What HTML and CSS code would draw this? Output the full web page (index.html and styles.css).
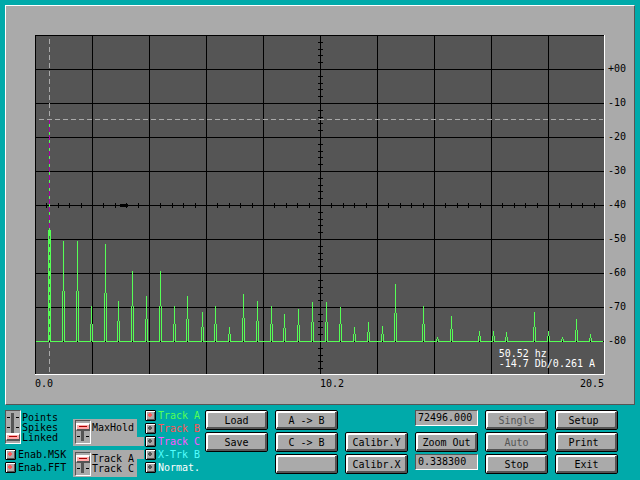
FILE: index.html
```html
<!DOCTYPE html>
<html lang="en">
<head>
<meta charset="utf-8">
<title>Spectrum</title>
<link rel="stylesheet" href="styles.css">
</head>
<body>
<main class="panel">
  <div class="plot">
    <svg class="chart" id="chart" viewBox="0 0 570 340" role="img" aria-label="Spectrum">
      <rect class="chart-bg" width="570" height="340"/>
      <path class="grid" id="grid"/>
      <path class="grid" id="ticks"/>
      <rect class="mark" x="85" y="169" width="8" height="3"/>
      <path class="trace" id="trace"/>
      <path class="edge" d="M569.5 0V339.5H0"/>
      <path class="cursor" d="M4 84.5H568"/>
      <path class="cursor" d="M14.5 4V84"/>
      <path class="held" d="M14.5 85V194"/>
      <path class="cross" d="M14.5 84V194"/>
      <path class="inner" d="M14.5 196V306"/>
      <path class="cursor" d="M14.5 308V338"/>
    </svg>
    <p class="readout">50.52 hz<br>-14.7 Db/0.261 A</p>
  </div>
  <ol class="y-axis">
    <li>+00</li><li>-10</li><li>-20</li><li>-30</li><li>-40</li><li>-50</li><li>-60</li><li>-70</li><li>-80</li>
  </ol>
  <div class="x-axis">
    <span class="low">0.0</span>
    <span class="mid">10.2</span>
    <span class="high">20.5</span>
  </div>
</main>

<form class="controls">
  <div class="modes">
    <div class="selector">
      <input class="slider tall" id="mode" type="range" min="0" max="2" value="2" aria-label="Drawing mode">
      <label class="lines spaced" for="mode"><span>Points</span><span>Spikes</span><span>Linked</span></label>
    </div>
    <div class="checks">
      <label class="check"><input type="checkbox" checked>Enab.MSK</label>
      <label class="check"><input type="checkbox" checked>Enab.FFT</label>
    </div>
  </div>

  <div class="sources">
    <div class="selector boxed upper">
      <input class="slider" id="hold" type="range" min="0" max="1" value="0" aria-label="MaxHold">
      <label class="lines" for="hold"><span>MaxHold</span></label>
    </div>
    <div class="selector boxed lower">
      <input class="slider" id="source" type="range" min="0" max="1" value="0" aria-label="Source track">
      <label class="lines" for="source"><span>Track A</span><span>Track C</span></label>
    </div>
  </div>

  <div class="checks tracks">
    <label class="check green"><input type="checkbox" checked>Track A</label>
    <label class="check red"><input type="checkbox">Track B</label>
    <label class="check pink"><input type="checkbox">Track C</label>
    <label class="check cyan"><input type="checkbox">X-Trk B</label>
    <label class="check white"><input type="checkbox">Normat.</label>
  </div>

  <div class="actions">
    <button type="button" class="col1">Load</button>
    <button type="button" class="col2">A -&gt; B</button>
    <input type="text" class="field col4" value="72496.000" aria-label="Span">
    <button type="button" class="col5" disabled>Single</button>
    <button type="button" class="col6">Setup </button>

    <button type="button" class="col1">Save</button>
    <button type="button" class="col2">C -&gt; B</button>
    <button type="button" class="col3">Calibr.Y</button>
    <button type="button" class="col4">Zoom Out</button>
    <button type="button" class="col5" disabled>Auto</button>
    <button type="button" class="col6">Print </button>

    <button type="button" class="col2" aria-label="Unassigned"></button>
    <button type="button" class="col3">Calibr.X</button>
    <input type="text" class="field col4" value="0.338300" aria-label="Scale">
    <button type="button" class="col5">Stop</button>
    <button type="button" class="col6">Exit</button>
  </div>
</form>
<script src="chart.js"></script>
</body>
</html>
```
FILE: chart.js
```js
// Grid: 10 columns of 57 units, 10 rows of 34 units.
let grid = "";
for (let i = 0; i < 10; i++) {
  grid += `M${i * 57 + 0.5} 0V340M0 ${i * 34 + 0.5}H570`;
}
document.getElementById("grid").setAttribute("d", grid);

// Five subdivisions per cell along both centre axes.
let ticks = "";
for (let i = 1; i < 50; i++) {
  if (i % 5 === 0) continue;
  const x = Math.round(i * 11.4) + 0.5;
  const y = Math.round(i * 6.8) + 0.5;
  ticks += `M${x} 168V173M283 ${y}H288`;
}
document.getElementById("ticks").setAttribute("d", ticks);

// Peaks as [x, top]; each one splits into two legs half-way down.
const base = 306;
const peaks = [
  [28, 206], [42, 206], [56, 271], [70, 209], [83, 266], [97, 236], [111, 261],
  [125, 236], [139, 271], [152, 261], [167, 277], [180, 271], [194, 292],
  [208, 259], [222, 266], [236, 271], [249, 279], [263, 274], [277, 267],
  [291, 267], [305, 272], [319, 292], [333, 287], [347, 291], [360, 249],
  [388, 271], [402, 302], [416, 281], [444, 296], [458, 296], [471, 297],
  [499, 277], [513, 296], [527, 302], [541, 284], [555, 299]
];
let trace = `M13.5 195V${base}M15.5 195V${base}M14.5 194V196`;
let from = 1;
for (const [x, top] of [[14, base], ...peaks]) {
  trace += `M${from} ${base + 0.5}H${x}`;
  from = x + 1;
  if (top === base) continue;
  const mid = Math.round((top + base) / 2);
  trace += `M${x + 0.5} ${top}V${mid}M${x - 0.5} ${mid}V${base}M${x + 1.5} ${mid}V${base}`;
}
trace += `M${from} ${base + 0.5}H568`;
document.getElementById("trace").setAttribute("d", trace);
```
FILE: styles.css
```css
:root {
  --teal: #00aaaa;
  --gray: #aaaaaa;
  --dark: #555555;
}

* { box-sizing: border-box; }

body {
  margin: 0;
  padding: 5px;
  background: var(--teal);
  color: #000;
  font: 10px/10px "DejaVu Sans Mono", "Liberation Mono", monospace;
}

.panel {
  display: grid;
  grid-template-columns: 1fr 29px;
  padding: 29px 0 11px 29px;
  background: var(--gray);
  border: 1px solid;
  border-color: #fff var(--dark) var(--dark) #fff;
}

.plot { position: relative; }

.chart {
  display: block;
  width: 100%;
  height: auto;
  shape-rendering: crispEdges;
}

.chart path { fill: none; stroke-width: 1; }
.chart-bg { fill: var(--dark); }
.chart .grid { stroke: #000; }
.chart .trace { stroke: #55ff55; }
.chart .edge { stroke: #fff; }
.chart .cursor { stroke: var(--gray); stroke-dasharray: 5 3; }
.chart .held { stroke: #aa00aa; }
.chart .cross { stroke: #55ff55; stroke-dasharray: 3 5; stroke-dashoffset: 3; }
.chart .inner { stroke: #55ff55; stroke-dasharray: 5 3; }

.readout {
  position: absolute;
  right: 10px;
  bottom: 6px;
  margin: 0;
  color: #fff;
  line-height: 10px;
}

.y-axis {
  margin: 0;
  padding: 17px 0 0 3px;
  list-style: none;
  line-height: 34px;
}

.x-axis {
  display: grid;
  grid-template-columns: 1fr 1fr 1fr 1fr;
  line-height: 18px;
}

.low { grid-column: 1 / 3; }
.high { padding-right: 1px; text-align: right; }

.controls {
  display: grid;
  grid-template-columns: 68px 72px 60px 1fr;
  padding: 5px 17px 0 0;
}

.selector { display: flex; gap: 1px; }
.lines { display: flex; flex-direction: column; justify-content: center; }
.spaced { padding-top: 2px; }

.boxed {
  position: relative;
  width: 64px;
  height: 27px;
  padding: 1px 0 0 2px;
  background: var(--gray);
}

.boxed::after {
  content: "";
  position: absolute;
  left: 100%;
  width: 7px;
  height: 9px;
  background: var(--gray);
}

.upper::after { bottom: 0; }
.lower::after { top: 0; }

.sources {
  display: flex;
  flex-direction: column;
  gap: 4px;
  padding-top: 9px;
}

.upper .lines { justify-content: flex-start; padding-top: 3px; }
.lower { padding-top: 2px; }
.lower .lines { padding-bottom: 2px; }

.slider {
  appearance: none;
  writing-mode: vertical-lr;
  width: 16px;
  height: 24px;
  margin: 0;
  padding: 2px 0;
  border: 1px solid;
  border-color: var(--dark) #fff #fff var(--dark);
  background:
    linear-gradient(var(--dark), var(--dark)) 5px 2px / 3px 18px no-repeat,
    linear-gradient(#000, #000) 1px 15px / 3px 1px no-repeat,
    linear-gradient(#000, #000) 10px 15px / 3px 1px no-repeat,
    var(--gray);
}

.slider.tall {
  height: 34px;
  background:
    linear-gradient(var(--dark), var(--dark)) 5px 2px / 3px 28px no-repeat,
    linear-gradient(#000, #000) 1px 6px / 3px 1px no-repeat,
    linear-gradient(#000, #000) 10px 6px / 3px 1px no-repeat,
    linear-gradient(#000, #000) 1px 16px / 3px 1px no-repeat,
    linear-gradient(#000, #000) 10px 16px / 3px 1px no-repeat,
    var(--gray);
}

.slider::-webkit-slider-thumb {
  appearance: none;
  width: 14px;
  height: 8px;
  border: solid;
  border-width: 2px 1px;
  border-color: #fff var(--dark) var(--dark) #fff;
  background: linear-gradient(#aa0000, #aa0000) 2px 1px / 8px 1px no-repeat, #ffaaaa;
}

.checks { display: flex; flex-direction: column; gap: 2px; }
.modes .checks { margin-top: 5px; }

.check { display: flex; align-items: center; gap: 2px; height: 11px; }

.check input {
  appearance: none;
  width: 11px;
  height: 11px;
  margin: 0;
  border: 1px solid #000;
  border-radius: 1px;
  background:
    linear-gradient(var(--dot), var(--dot)) 3px 2px / 2px 4px no-repeat,
    linear-gradient(var(--dot), var(--dot)) 2px 3px / 4px 2px no-repeat,
    var(--gray);
  box-shadow: inset 1px 1px #fff, inset -1px -1px var(--dark);
  --dot: #555555;
}

.check input:checked { --dot: #ff5555; }

.green { color: #55ff55; }
.red { color: #ff5555; }
.pink { color: #ff55ff; }
.cyan { color: #55ffff; }
.white { color: #fff; }

.actions {
  display: grid;
  grid-template-columns: repeat(6, 1fr);
  grid-auto-rows: 20px;
  gap: 2px 7px;
}

.col1 { grid-column: 1; }
.col2 { grid-column: 2; }
.col3 { grid-column: 3; }
.col4 { grid-column: 4; }
.col5 { grid-column: 5; }
.col6 { grid-column: 6; }

button {
  min-width: 0;
  padding: 1px 0 0;
  border: 1px solid #000;
  border-radius: 2px;
  background: var(--gray);
  box-shadow: inset 1px 1px #fff, inset -2px -2px var(--dark), inset 2px 2px #fff;
  color: #000;
  font: inherit;
  white-space: pre;
}

button:disabled { color: var(--dark); }

.field {
  width: 100%;
  min-width: 0;
  height: 16px;
  padding: 0 2px 2px;
  border: 1px solid;
  border-color: var(--dark) #fff #fff var(--dark);
  background: var(--gray);
  color: #000;
  font: inherit;
}
```
